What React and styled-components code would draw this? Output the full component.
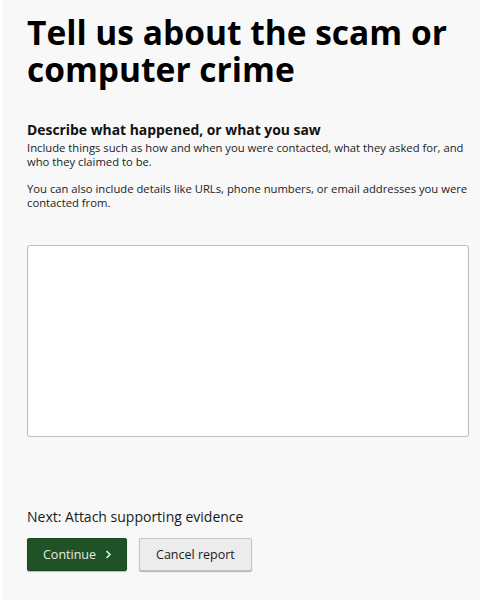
import styled, { createGlobalStyle } from 'styled-components';

const GlobalStyle = createGlobalStyle`
  html, body {
    margin: 0;
    padding: 0;
    background: #f8f8f8;
  }
  body {
    font-family: "Open Sans", "Noto Sans", sans-serif;
    color: #0b0c0c;
  }
`;

const Page = styled.main`
  box-sizing: border-box;
  min-height: 600px;
  padding: 14px 11px 0 25px;
  border-left: 2px solid #ffffff;
`;

const Heading = styled.h1`
  margin: 0 0 33px;
  font-size: 33.5px;
  line-height: 37px;
  font-weight: 700;
  color: #000;
`;

const Field = styled.div`
  display: flex;
  flex-direction: column;
`;

const Label = styled.label`
  font-size: 13.9px;
  line-height: 18px;
  font-weight: 700;
  color: #111;
`;

const Hint = styled.p`
  margin: ${p => (p.$first ? '2px 0 0' : '13px 0 0')};
  font-size: 11.25px;
  line-height: 14px;
  color: #222;
`;

const TextArea = styled.textarea`
  box-sizing: border-box;
  width: 442px;
  height: 192px;
  margin-top: 35px;
  border: 1.5px solid #bdbdbd;
  border-radius: 3px;
  background: #fff;
  resize: none;
  font: inherit;
`;

const NextStep = styled.p`
  margin: 71px 0 0;
  font-size: 14px;
  line-height: 18px;
  color: #1a1a1a;
`;

const Actions = styled.div`
  display: flex;
  gap: 12px;
  margin-top: 12px;
`;

const Button = styled.button`
  box-sizing: border-box;
  height: 33px;
  padding: ${p => (p.$primary ? '0 14px 0 15px' : '0 16px')};
  display: inline-flex;
  align-items: center;
  gap: 9px;
  font-family: inherit;
  font-size: 12.5px;
  font-weight: ${p => (p.$primary ? 500 : 400)};
  border-radius: 2px;
  cursor: pointer;
  color: ${p => (p.$primary ? '#e4eee4' : '#1a1a1a')};
  background: ${p => (p.$primary ? '#1f5226' : '#ececec')};
  border: 1px solid ${p => (p.$primary ? '#1a4620' : '#c4c4c4')};
  box-shadow: 0 1px 1px ${p => (p.$primary ? 'rgba(0,0,0,0.25)' : 'rgba(0,0,0,0.3)')};
`;

const Chevron = () => (
  <svg width="7" height="9" viewBox="0 0 7 9" aria-hidden="true">
    <path d="M1.5 1 L5 4.5 L1.5 8" fill="none" stroke="currentColor" strokeWidth="1.6" />
  </svg>
);

export default function App() {
  return (
    <>
      <GlobalStyle />
      <Page>
        <Heading>Tell us about the scam or computer crime</Heading>
        <Field>
          <Label htmlFor="what-happened">Describe what happened, or what you saw</Label>
          <Hint $first>
            Include things such as how and when you were contacted, what they asked for, and
            who they claimed to be.
          </Hint>
          <Hint>
            You can also include details like URLs, phone numbers, or email addresses you were
            contacted from.
          </Hint>
          <TextArea id="what-happened" />
        </Field>
        <NextStep>Next: Attach supporting evidence</NextStep>
        <Actions>
          <Button $primary>
            Continue <Chevron />
          </Button>
          <Button>Cancel report</Button>
        </Actions>
      </Page>
    </>
  );
}
